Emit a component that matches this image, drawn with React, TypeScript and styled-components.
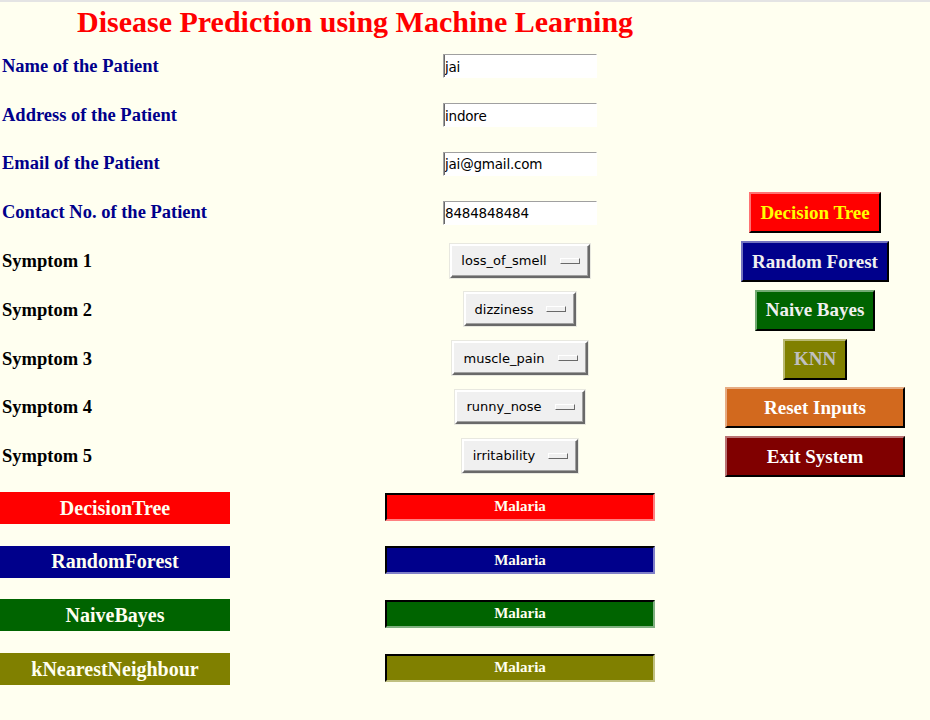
import React from "react";
import styled, { createGlobalStyle } from "styled-components";

const Global = createGlobalStyle`
  html, body { margin: 0; padding: 0; background: #fffff0; }
  body { overflow: hidden; }
`;

const Page = styled.div`
  width: 930px;
  height: 720px;
  box-sizing: border-box;
  border-top: 2px solid #e4e4e4;
  background: #fffff0;
  display: grid;
  grid-template-columns: 385px 270px 45px 230px;
  grid-template-rows: 40px repeat(9, 48.8px) repeat(4, 53.7px);
  font-family: "Liberation Serif", "Times New Roman", serif;
`;

const Title = styled.h1`
  grid-row: 1;
  grid-column: 1 / -1;
  align-self: center;
  margin: 0;
  padding-left: 77px;
  font-size: 30px;
  font-weight: bold;
  color: #ff0000;
  line-height: 1;
`;

const FieldLabel = styled.div<{ $row: number; $blue?: boolean }>`
  grid-row: ${(p) => p.$row};
  grid-column: 1;
  align-self: center;
  padding-left: 2px;
  font-size: 18.5px;
  font-weight: bold;
  color: ${(p) => (p.$blue ? "#00008b" : "#000000")};
`;

const Entry = styled.input<{ $row: number }>`
  grid-row: ${(p) => p.$row};
  grid-column: 2;
  justify-self: center;
  align-self: center;
  width: 154px;
  height: 24px;
  box-sizing: border-box;
  margin: 0;
  padding: 1px 1px 0 1px;
  background: #ffffff;
  border: 1px solid;
  border-color: #a0a0a0 #ffffff #ffffff #a0a0a0;
  box-shadow: inset 1px 0 0 #696969;
  font-family: "DejaVu Sans", Tahoma, sans-serif;
  font-size: 13.5px;
  letter-spacing: -0.2px;
  color: #000;
  outline: none;
`;

const Dropdown = styled.button<{ $row: number }>`
  grid-row: ${(p) => p.$row};
  grid-column: 2;
  justify-self: center;
  align-self: center;
  height: 34px;
  box-sizing: border-box;
  margin: -2px 0 0 0;
  padding: 0 8px 0 9px;
  display: flex;
  align-items: center;
  gap: 13px;
  background: #f0f0f0;
  border: 2px solid;
  border-color: #ffffff #696969 #696969 #ffffff;
  box-shadow: inset -1px -1px 0 #a0a0a0, 0 0 0 1px #e8e8e0;
  font-family: "DejaVu Sans", Tahoma, sans-serif;
  font-size: 13px;
  color: #000;
`;

const Indicator = styled.span`
  display: block;
  width: 20px;
  height: 6px;
  box-sizing: border-box;
  background: #f0f0f0;
  border: 1px solid;
  border-color: #ffffff #696969 #696969 #ffffff;
`;

const ActionButton = styled.button<{ $row: number; $bg: string; $fg: string; $width?: number }>`
  grid-row: ${(p) => p.$row};
  grid-column: 4;
  justify-self: center;
  align-self: center;
  height: 41px;
  ${(p) => (p.$width ? `width: ${p.$width}px;` : "")}
  box-sizing: border-box;
  margin: 0;
  padding: 0 9px;
  background: ${(p) => p.$bg};
  color: ${(p) => p.$fg};
  border: 2px solid;
  border-color: rgba(255, 255, 255, 0.45) #000 #000 rgba(255, 255, 255, 0.45);
  font-family: "Liberation Serif", "Times New Roman", serif;
  font-size: 19px;
  font-weight: bold;
  white-space: nowrap;
`;

const AlgoName = styled.div<{ $row: number; $bg: string }>`
  grid-row: ${(p) => p.$row};
  grid-column: 1;
  align-self: center;
  width: 230px;
  height: 32px;
  display: flex;
  align-items: center;
  justify-content: center;
  background: ${(p) => p.$bg};
  color: #fffff0;
  font-size: 20px;
  font-weight: bold;
`;

const Result = styled.div<{ $row: number; $bg: string; $edge: string }>`
  grid-row: ${(p) => p.$row};
  grid-column: 2;
  align-self: center;
  width: 270px;
  height: 28px;
  margin-top: -3px;
  box-sizing: border-box;
  display: flex;
  align-items: center;
  justify-content: center;
  background: ${(p) => p.$bg};
  border: 2px solid;
  border-color: #000 ${(p) => p.$edge} ${(p) => p.$edge} #000;
  color: #fffff0;
  font-size: 15px;
  font-weight: bold;
`;

const fields = [
  { label: "Name of the Patient", value: "jai" },
  { label: "Address of the Patient", value: "indore" },
  { label: "Email of the Patient", value: "jai@gmail.com" },
  { label: "Contact No. of the Patient", value: "8484848484" },
];

const symptoms = ["loss_of_smell", "dizziness", "muscle_pain", "runny_nose", "irritability"];

const actions = [
  { text: "Decision Tree", bg: "#ff0000", fg: "#ffff00" },
  { text: "Random Forest", bg: "#00008b", fg: "#f0f0f0" },
  { text: "Naive Bayes", bg: "#006400", fg: "#f0f0f0" },
  { text: "KNN", bg: "#808000", fg: "#c0c0c0" },
  { text: "Reset Inputs", bg: "#d2691e", fg: "#ffffff", width: 180 },
  { text: "Exit System", bg: "#800000", fg: "#ffffff", width: 180 },
];

const algos = [
  { name: "DecisionTree", bg: "#ff0000", edge: "#ff8080" },
  { name: "RandomForest", bg: "#00008b", edge: "#8080c8" },
  { name: "NaiveBayes", bg: "#006400", edge: "#80b080" },
  { name: "kNearestNeighbour", bg: "#808000", edge: "#c0c080" },
];

export default function App() {
  return (
    <Page>
      <Global />
      <Title>Disease Prediction using Machine Learning</Title>
      {fields.map((f, i) => (
        <React.Fragment key={f.label}>
          <FieldLabel $row={i + 2} $blue>
            {f.label}
          </FieldLabel>
          <Entry $row={i + 2} defaultValue={f.value} />
        </React.Fragment>
      ))}
      {symptoms.map((s, i) => (
        <React.Fragment key={s}>
          <FieldLabel $row={i + 6}>Symptom {i + 1}</FieldLabel>
          <Dropdown $row={i + 6}>
            <span>{s}</span>
            <Indicator />
          </Dropdown>
        </React.Fragment>
      ))}
      {actions.map((a, i) => (
        <ActionButton key={a.text} $row={i + 5} $bg={a.bg} $fg={a.fg} $width={a.width}>
          {a.text}
        </ActionButton>
      ))}
      {algos.map((a, i) => (
        <React.Fragment key={a.name}>
          <AlgoName $row={i + 11} $bg={a.bg}>
            {a.name}
          </AlgoName>
          <Result $row={i + 11} $bg={a.bg} $edge={a.edge}>
            Malaria
          </Result>
        </React.Fragment>
      ))}
    </Page>
  );
}
